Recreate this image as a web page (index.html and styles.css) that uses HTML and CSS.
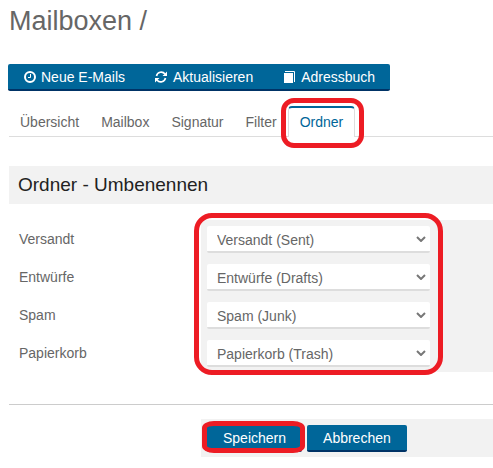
FILE: index.html
```html
<!DOCTYPE html>
<html lang="de">
<head>
<meta charset="UTF-8">
<meta name="viewport" content="width=device-width, initial-scale=1.0">
<title>Mailboxen</title>
<link rel="stylesheet" href="styles.css">
</head>
<body>
<h1 class="page-title">Mailboxen /</h1>

<div class="toolbar">
    <button type="button" class="btn">
        <svg class="icon" viewBox="0 0 14 14"><circle cx="7" cy="7" r="5" fill="none" stroke="#fff" stroke-width="2"/><path d="M7.500 4v3.500H5" fill="none" stroke="#fff"/></svg>
        Neue E-Mails
    </button>
    <button type="button" class="btn">
        <svg class="icon" viewBox="0 0 14 14"><path d="M1.500 6a4.800 4.800 0 0 1 8.500-2M10.500 8a4.800 4.800 0 0 1-8.500 2" fill="none" stroke="#fff" stroke-width="1.600"/><path d="M12 1.500v4.500H7.500zM0 12.500V8h4.500z" fill="#fff"/></svg>
        Aktualisieren
    </button>
    <button type="button" class="btn">
        <svg class="icon" viewBox="0 0 14 14"><path d="M1 3h9v10H1z" fill="#fff"/><path d="M2 1.500H11.500V12" fill="none" stroke="#fff"/></svg>
        Adressbuch
    </button>
</div>

<nav class="tabs">
    <a class="tab" href="#">Übersicht</a>
    <a class="tab" href="#">Mailbox</a>
    <a class="tab" href="#">Signatur</a>
    <a class="tab" href="#">Filter</a>
    <a class="tab active" href="#">Ordner<span class="mark mark-tab"></span></a>
</nav>

<form class="folders">
    <h2 class="section-title">Ordner - Umbenennen</h2>

    <div class="rows">
        <div class="row">
            <label for="sent">Versandt</label>
            <div class="field">
                <select id="sent"><option>Versandt (Sent)</option></select>
                <svg class="chevron" viewBox="0 0 10 6"><path d="M1 1l4 4 4-4"/></svg>
            </div>
        </div>
        <div class="row">
            <label for="drafts">Entwürfe</label>
            <div class="field">
                <select id="drafts"><option>Entwürfe (Drafts)</option></select>
                <svg class="chevron" viewBox="0 0 10 6"><path d="M1 1l4 4 4-4"/></svg>
            </div>
        </div>
        <div class="row">
            <label for="junk">Spam</label>
            <div class="field">
                <select id="junk"><option>Spam (Junk)</option></select>
                <svg class="chevron" viewBox="0 0 10 6"><path d="M1 1l4 4 4-4"/></svg>
            </div>
        </div>
        <div class="row">
            <label for="trash">Papierkorb</label>
            <div class="field">
                <select id="trash"><option>Papierkorb (Trash)</option></select>
                <svg class="chevron" viewBox="0 0 10 6"><path d="M1 1l4 4 4-4"/></svg>
            </div>
        </div>
        <span class="mark mark-fields"></span>
    </div>

    <div class="footer">
        <div class="field actions">
            <div class="save">
                <button type="submit" class="btn">Speichern</button>
                <span class="mark mark-save"></span>
            </div>
            <button type="button" class="btn">Abbrechen</button>
        </div>
    </div>
</form>
</body>
</html>
```
FILE: styles.css
```css
* {
    box-sizing: border-box;
}

body {
    margin: 0;
    padding: 5px 0 0 9px;
    background: #fff;
    color: #666;
    font-family: "Liberation Sans", Arial, sans-serif;
    font-size: 14px;
    line-height: 20px;
}

.page-title {
    margin: 0 0 27px;
    font-size: 27px;
    font-weight: normal;
    line-height: 32px;
}

.btn {
    display: flex;
    align-items: center;
    gap: 4px;
    height: 27px;
    padding: 0 16px;
    border: 0;
    border-bottom: 2px solid #036;
    border-radius: 2px;
    background: #069;
    color: #fff;
    font: inherit;
    white-space: nowrap;
    cursor: pointer;
}

/* button group */
.toolbar {
    display: flex;
    margin-left: -1px;
}

.toolbar .btn {
    padding: 0 15px;
    border-radius: 0;
}

.toolbar .btn:first-child {
    border-radius: 2px 0 0 2px;
}

.toolbar .btn:last-child {
    border-radius: 0 2px 2px 0;
}

.icon {
    width: 14px;
    height: 14px;
}

.tabs {
    display: flex;
    margin-top: 15px;
    border-bottom: 1px solid #ddd;
}

.tab {
    position: relative;
    height: 31px;
    margin-bottom: -1px;
    padding: 4px 10px 0;
    border: 1px solid transparent;
    border-top-width: 2px;
    border-bottom: 0;
    border-radius: 4px 4px 0 0;
    color: #666;
    text-decoration: none;
}

.tab.active {
    padding: 4px 11px 0;
    border-color: #069 #ddd;
    background: #fff;
    color: #069;
}

.section-title {
    margin: 29px 0 16px;
    padding: 0 9px;
    background: #f2f2f2;
    color: #222;
    font-size: 19px;
    font-weight: normal;
    line-height: 38px;
}

.rows {
    position: relative;
}

.row {
    display: grid;
    grid-template-columns: 192px 1fr;
}

.row label {
    padding: 9px 10px;
}

.field {
    position: relative;
    height: 38px;
    padding: 6px;
    background: #f2f2f2;
}

select {
    display: block;
    width: 223px;
    height: 27px;
    padding: 2px 10px 0;
    border: 0;
    border-bottom: 2px solid #ddd;
    border-radius: 2px;
    background: #fff;
    color: #666;
    font: inherit;
    appearance: none;
}

.chevron {
    position: absolute;
    top: 16px;
    left: 215px;
    width: 10px;
    height: 6px;
    fill: none;
    stroke: #777;
    stroke-width: 2;
    pointer-events: none;
}

.footer {
    margin-top: 32px;
    padding: 14px 0 0 192px;
    border-top: 1px solid #ccc;
}

.actions {
    display: flex;
    gap: 5px;
}

.save {
    position: relative;
}

/* red highlight frames */
.mark {
    position: absolute;
    border: 5px solid #ed1c24;
    pointer-events: none;
}

.mark-tab {
    inset: -10px -10px -11px -8px;
    border-radius: 13px;
}

.mark-fields {
    top: -7px;
    left: 185px;
    width: 249px;
    height: 162px;
    border-radius: 18px;
}

.mark-save {
    inset: -4px -3px -2px -5px;
    border-radius: 12px / 7px;
}
```
